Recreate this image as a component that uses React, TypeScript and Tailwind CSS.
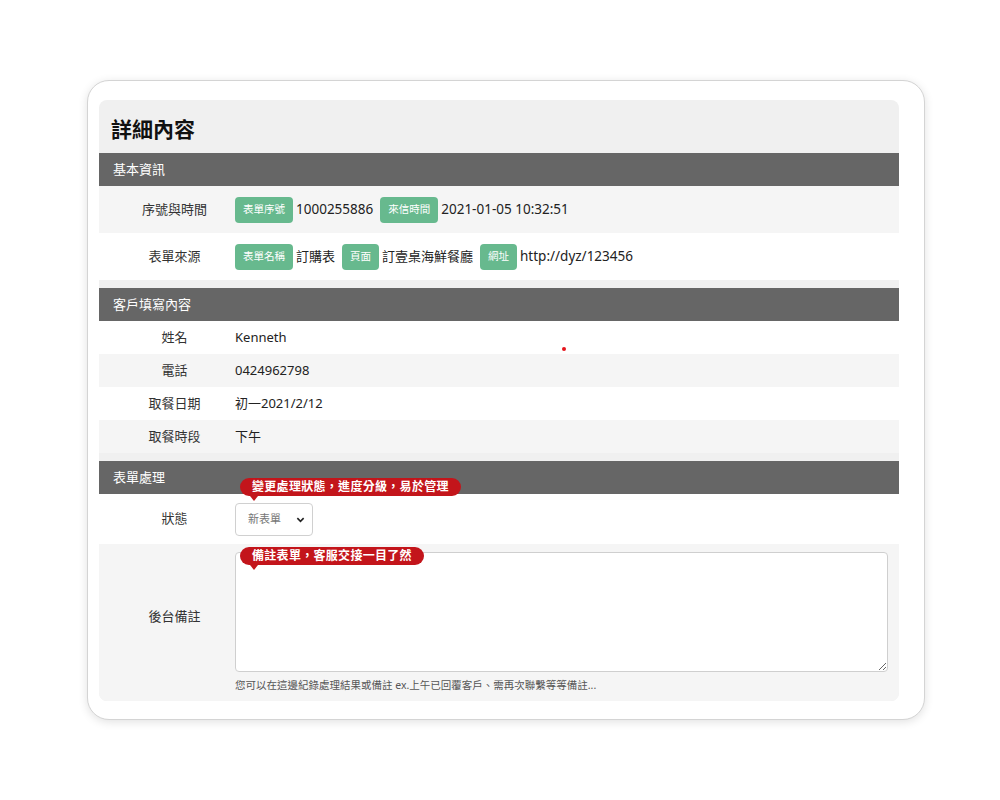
const FONT = { fontFamily: '"Noto Sans", "Noto Sans CJK TC", sans-serif' };

function Badge({ children }: { children: React.ReactNode }) {
  return (
    <span className="mr-[3px] inline-flex h-[26px] items-center rounded-[4px] bg-[#67b98e] px-[8px] text-[10.5px] text-white">
      {children}
    </span>
  );
}

function Tip({ children, top }: { children: React.ReactNode; top: string }) {
  return (
    <div className={`absolute left-[5px] z-10 ${top}`}>
      <div className="flex h-[18px] items-center whitespace-nowrap rounded-full bg-[#c3151b] px-[12px] text-[12px] font-bold leading-none tracking-[0.3px] text-white">
        {children}
      </div>
      <div className="ml-[10px] h-0 w-0 border-x-[4px] border-t-[5px] border-x-transparent border-t-[#c3151b]" />
    </div>
  );
}

function SectionHead({ title }: { title: string }) {
  return (
    <div className="flex h-[33px] items-center bg-[#666666] pl-[14px] text-[13px] text-white">
      {title}
    </div>
  );
}

function Row({
  label,
  shade,
  h,
  children,
}: {
  label: string;
  shade?: boolean;
  h: string;
  children: React.ReactNode;
}) {
  return (
    <div className={`flex items-center ${h} ${shade ? "bg-[#f5f5f5]" : "bg-white"}`}>
      <div className="w-[136px] shrink-0 pl-[15px] text-center text-[13px] text-[#333]">{label}</div>
      <div className="flex flex-1 items-center pr-[11px] text-[13px] text-[#222]">{children}</div>
    </div>
  );
}

export default function App() {
  return (
    <div className="relative min-h-screen bg-white pt-[80px]" style={FONT}>
      <div className="ml-[87px] w-[838px] rounded-[22px] border border-[#d4d4d4] bg-white pb-[18px] pl-[11px] pr-[25px] pt-[19px] shadow-[0_2px_10px_rgba(0,0,0,0.12)]">
        <div className="overflow-hidden rounded-[8px] bg-[#f0f0f0]">
          <div className="flex h-[53px] items-center pl-[12px] pt-[6px] text-[21px] font-bold text-[#111]">
            詳細內容
          </div>

          <SectionHead title="基本資訊" />
          <Row label="序號與時間" shade h="h-[47px]">
            <Badge>表單序號</Badge>
            <span className="mr-[7px] text-[13.5px]">1000255886</span>
            <Badge>來信時間</Badge>
            <span className="text-[13.5px]">2021-01-05 10:32:51</span>
          </Row>
          <Row label="表單來源" h="h-[47px]">
            <Badge>表單名稱</Badge>
            <span className="mr-[7px]">訂購表</span>
            <Badge>頁面</Badge>
            <span className="mr-[7px]">訂壹桌海鮮餐廳</span>
            <Badge>網址</Badge>
            <span className="text-[13.5px]">http://dyz/123456</span>
          </Row>

          <div className="h-[8px]" />
          <SectionHead title="客戶填寫內容" />
          <Row label="姓名" h="h-[33px]">Kenneth</Row>
          <Row label="電話" shade h="h-[33px]">0424962798</Row>
          <Row label="取餐日期" h="h-[33px]">初一2021/2/12</Row>
          <Row label="取餐時段" shade h="h-[33px]">下午</Row>

          <div className="h-[8px]" />
          <SectionHead title="表單處理" />
          <Row label="狀態" h="h-[50px]">
            <div className="relative">
              <Tip top="top-[-25px]">變更處理狀態，進度分級，易於管理</Tip>
              <div className="flex h-[33px] w-[78px] items-center justify-between rounded-[4px] border border-[#d0d0d0] bg-white pl-[12px] pr-[7px] text-[11px] text-[#777]">
                <span>新表單</span>
                <svg width="9" height="9" viewBox="0 0 10 10">
                  <path d="M1.5 3.5 L5 7 L8.5 3.5" fill="none" stroke="#222" strokeWidth="1.8" />
                </svg>
              </div>
            </div>
          </Row>
          <div className="flex bg-[#f5f5f5] pb-[7px] pt-[8px]">
            <div className="flex w-[136px] shrink-0 items-center justify-center pb-[12px] pl-[15px] text-[13px] text-[#333]">
              後台備註
            </div>
            <div className="flex-1 pr-[11px]">
              <div className="relative">
                <Tip top="top-[-5px]">備註表單，客服交接一目了然</Tip>
                <textarea className="block h-[120px] w-full resize-y rounded-[4px] border border-[#cfcfcf] bg-white" />
              </div>
              <div className="mt-[6px] text-[10.5px] text-[#555]">
                您可以在這邊紀錄處理結果或備註 ex.上午已回覆客戶、需再次聯繫等等備註...
              </div>
            </div>
          </div>
        </div>
      </div>
      <div className="absolute left-[562px] top-[347px] h-[4px] w-[4px] rounded-full bg-[#e5141b]" />
    </div>
  );
}
